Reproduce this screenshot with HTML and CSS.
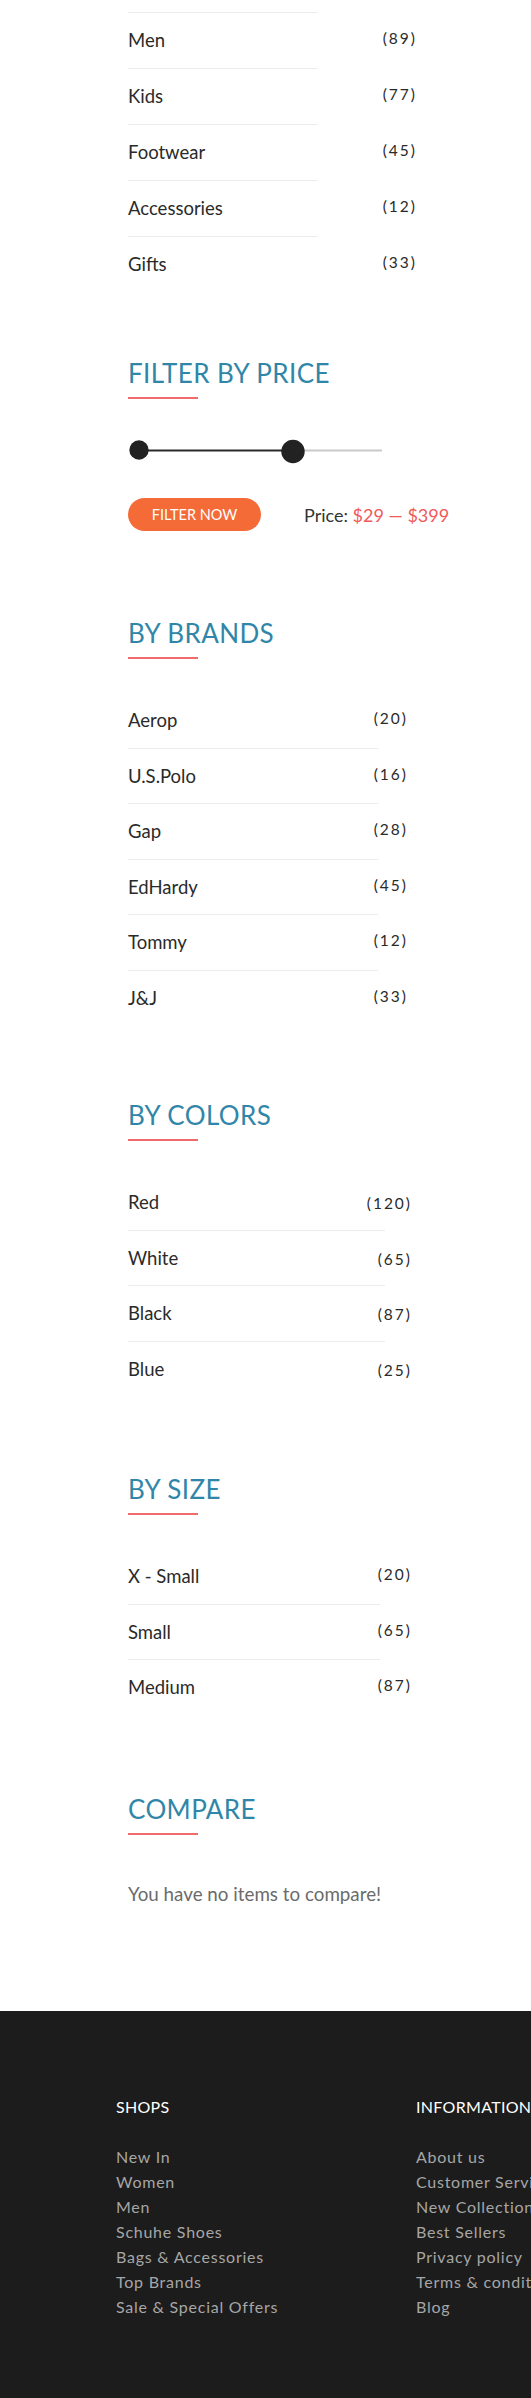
FILE: index.html
```html
<!DOCTYPE html>
<html lang="en">
<head>
<meta charset="utf-8">
<title>Shop sidebar</title>
<link rel="stylesheet" href="styles.css">
</head>
<body>
<main class="sidebar">
  <section class="widget widget--cats">
    <ul class="tally tally--cats">
      <li class="tally__row"><span class="tally__name">Men</span><span class="tally__count">(89)</span></li>
      <li class="tally__row"><span class="tally__name">Kids</span><span class="tally__count">(77)</span></li>
      <li class="tally__row"><span class="tally__name">Footwear</span><span class="tally__count">(45)</span></li>
      <li class="tally__row"><span class="tally__name">Accessories</span><span class="tally__count">(12)</span></li>
      <li class="tally__row"><span class="tally__name">Gifts</span><span class="tally__count">(33)</span></li>
    </ul>
  </section>

  <section class="widget widget--price">
    <h2 class="widget__title">Filter by price</h2>
    <svg class="slider" viewBox="0 0 256 26" width="256" height="26" aria-hidden="true">
      <line x1="165" y1="12.5" x2="254" y2="12.5" stroke="#c9c9c9" stroke-width="2"/>
      <line x1="11" y1="12.5" x2="165" y2="12.5" stroke="#2b2b2b" stroke-width="2"/>
      <circle cx="11" cy="12" r="9.7" fill="#222"/>
      <circle cx="165" cy="13.5" r="11.7" fill="#222"/>
    </svg>
    <div class="price-row">
      <button class="btn" type="button">Filter now</button>
      <p class="price">Price: <span class="price__range">$29 — $399</span></p>
    </div>
  </section>

  <section class="widget widget--brands">
    <h2 class="widget__title">By brands</h2>
    <ul class="tally tally--brands">
      <li class="tally__row"><span class="tally__name">Aerop</span><span class="tally__count">(20)</span></li>
      <li class="tally__row"><span class="tally__name">U.S.Polo</span><span class="tally__count">(16)</span></li>
      <li class="tally__row"><span class="tally__name">Gap</span><span class="tally__count">(28)</span></li>
      <li class="tally__row"><span class="tally__name">EdHardy</span><span class="tally__count">(45)</span></li>
      <li class="tally__row"><span class="tally__name">Tommy</span><span class="tally__count">(12)</span></li>
      <li class="tally__row"><span class="tally__name">J&amp;J</span><span class="tally__count">(33)</span></li>
    </ul>
  </section>

  <section class="widget widget--colors">
    <h2 class="widget__title">By colors</h2>
    <ul class="tally tally--colors">
      <li class="tally__row"><span class="tally__name">Red</span><span class="tally__count">(120)</span></li>
      <li class="tally__row"><span class="tally__name">White</span><span class="tally__count">(65)</span></li>
      <li class="tally__row"><span class="tally__name">Black</span><span class="tally__count">(87)</span></li>
      <li class="tally__row"><span class="tally__name">Blue</span><span class="tally__count">(25)</span></li>
    </ul>
  </section>

  <section class="widget widget--size">
    <h2 class="widget__title">By size</h2>
    <ul class="tally tally--size">
      <li class="tally__row"><span class="tally__name">X - Small</span><span class="tally__count">(20)</span></li>
      <li class="tally__row"><span class="tally__name">Small</span><span class="tally__count">(65)</span></li>
      <li class="tally__row"><span class="tally__name">Medium</span><span class="tally__count">(87)</span></li>
    </ul>
  </section>

  <section class="widget widget--compare">
    <h2 class="widget__title">Compare</h2>
    <p class="compare-note">You have no items to compare!</p>
  </section>
</main>

<footer class="footer">
  <div class="footer__col">
    <h3 class="footer__title">SHOPS</h3>
    <ul class="footer__links">
      <li>New In</li>
      <li>Women</li>
      <li>Men</li>
      <li>Schuhe Shoes</li>
      <li>Bags &amp; Accessories</li>
      <li>Top Brands</li>
      <li>Sale &amp; Special Offers</li>
    </ul>
  </div>
  <div class="footer__col">
    <h3 class="footer__title">INFORMATION</h3>
    <ul class="footer__links">
      <li>About us</li>
      <li>Customer Service</li>
      <li>New Collection</li>
      <li>Best Sellers</li>
      <li>Privacy policy</li>
      <li>Terms &amp; conditions</li>
      <li>Blog</li>
    </ul>
  </div>
</footer>
</body>
</html>
```

FILE: styles.css
```css
* {
  box-sizing: border-box;
  margin: 0;
  padding: 0;
}

html, body {
  background: #fff;
}

body {
  font-family: Lato, "Open Sans", sans-serif;
  color: #2a2a2a;
}

.sidebar {
  margin-left: 128px;
  padding-top: 12px;
  padding-bottom: 105px;
}

/* ---------- section headings ---------- */
.widget__title {
  font-size: 26px;
  line-height: 30px;
  font-weight: 400;
  color: #3086a8;
  text-transform: uppercase;
  letter-spacing: 0.4px;
}

.widget__title::after {
  content: "";
  display: block;
  width: 70px;
  height: 2px;
  margin-top: 9px;
  background: #ef6b6b;
}

.widget--price   { padding-top: 65px; }
.widget--brands  { padding-top: 87px; }
.widget--colors  { padding-top: 74px; }
.widget--size    { padding-top: 77px; }
.widget--compare { padding-top: 78px; }

/* ---------- count lists ---------- */
.tally {
  list-style: none;
  margin-top: 34px;
  --rule: 250px;
}

.tally__row {
  display: flex;
  justify-content: space-between;
  align-items: flex-start;
  padding: 16px 0 17.5px;
  font-size: 18.5px;
  line-height: 22px;
  background: linear-gradient(#ececec, #ececec) no-repeat left bottom / var(--rule) 1px;
}

.tally__row:last-child {
  background: none;
}

.tally__count {
  font-size: 15.5px;
  line-height: 16px;
  letter-spacing: 2px;
  margin-top: 1px;
  margin-right: -2px;
  color: #2a2a2a;
}

.tally--cats {
  margin-top: 0;
  width: 287px;
  --rule: 190px;
  padding-top: 1px;
  background: linear-gradient(#ececec, #ececec) no-repeat left top / 190px 1px;
}

.tally--cats .tally__row {
  padding-bottom: 18px;
}

.tally--brands {
  width: 278px;
  --rule: 250px;
}

.tally--colors {
  width: 282px;
  --rule: 257px;
}

.tally--colors .tally__count {
  margin-top: 4px;
}

.tally--size {
  width: 282px;
  --rule: 252px;
}

/* ---------- price filter ---------- */
.slider {
  display: block;
  margin-top: 39px;
}

.price-row {
  display: flex;
  align-items: center;
  gap: 43px;
  margin-top: 34px;
}

.btn {
  width: 133px;
  height: 33px;
  border: 0;
  border-radius: 17px;
  background: #f46b38;
  color: #fff;
  font-family: Lato, "Open Sans", sans-serif;
  font-size: 14.5px;
  line-height: 33px;
  text-transform: uppercase;
}

.price {
  font-size: 18px;
  line-height: 22px;
  color: #333;
}

.price__range {
  color: #f05a5a;
}

/* ---------- compare ---------- */
.compare-note {
  margin-top: 47px;
  font-size: 18.8px;
  line-height: 24px;
  color: #6b6b6b;
}

/* ---------- footer ---------- */
.footer {
  background: #1c1c1c;
  padding: 86px 0 79px 116px;
  display: grid;
  grid-template-columns: 300px 300px;
  overflow: hidden;
}

.footer__title {
  font-size: 16px;
  line-height: 20px;
  font-weight: 400;
  color: #fff;
  letter-spacing: 0.3px;
  margin-bottom: 27px;
  white-space: nowrap;
}

.footer__links {
  list-style: none;
  font-size: 16px;
  line-height: 25px;
  color: #a6a6a6;
  letter-spacing: 0.75px;
  white-space: nowrap;
}
```
